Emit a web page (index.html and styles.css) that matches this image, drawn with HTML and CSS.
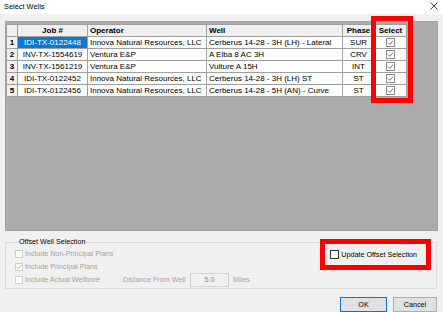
FILE: index.html
```html
<!DOCTYPE html>
<html>
    <head>
        <meta charset="utf-8">
        <link rel="stylesheet" href="styles.css">
    </head>
<body>
    <div class="titlebar">
        <span class="title">Select Wells</span>
        <svg class="close" width="8" height="8" viewBox="0 0 8 8"><path d="M0.5 0.5L7.5 7.5M7.5 0.5L0.5 7.5" stroke="#333" stroke-width="0.9"/></svg>
    </div>

    <div class="grid">
        <table class="wells">
            <colgroup>
                <col style="width:11px"><col style="width:70px"><col style="width:119px">
                <col style="width:136px"><col style="width:32px"><col style="width:32px">
            </colgroup>
            <tr class="head">
                <th></th><th>Job #</th><th class="left">Operator</th><th class="left">Well</th><th>Phase</th><th>Select</th>
            </tr>
            <tr>
                <th>1</th><td class="mid selected">IDI-TX-0122448</td><td>Innova Natural Resources, LLC</td><td>Cerberus 14-28 - 3H (LH) - Lateral</td><td class="mid">SUR</td>
                <td class="mid"><svg class="tick" width="9" height="9" viewBox="0 0 9 9"><rect x="0.5" y="0.5" width="8" height="8" fill="#fff" stroke="#8c8c8c"/><path d="M2 4.6L3.8 6.4L7 2.6" fill="none" stroke="#707070"/></svg></td>
            </tr>
            <tr>
                <th>2</th><td class="mid">INV-TX-1554619</td><td>Ventura E&amp;P</td><td>A Elba 8 AC 3H</td><td class="mid">CRV</td>
                <td class="mid"><svg class="tick" width="9" height="9" viewBox="0 0 9 9"><rect x="0.5" y="0.5" width="8" height="8" fill="#fff" stroke="#8c8c8c"/><path d="M2 4.6L3.8 6.4L7 2.6" fill="none" stroke="#707070"/></svg></td>
            </tr>
            <tr>
                <th>3</th><td class="mid">INV-TX-1561219</td><td>Ventura E&amp;P</td><td>Vulture A 15H</td><td class="mid">INT</td>
                <td class="mid"><svg class="tick" width="9" height="9" viewBox="0 0 9 9"><rect x="0.5" y="0.5" width="8" height="8" fill="#fff" stroke="#8c8c8c"/><path d="M2 4.6L3.8 6.4L7 2.6" fill="none" stroke="#707070"/></svg></td>
            </tr>
            <tr>
                <th>4</th><td class="mid">IDI-TX-0122452</td><td>Innova Natural Resources, LLC</td><td>Cerberus 14-28 - 3H (LH) ST</td><td class="mid">ST</td>
                <td class="mid"><svg class="tick" width="9" height="9" viewBox="0 0 9 9"><rect x="0.5" y="0.5" width="8" height="8" fill="#fff" stroke="#8c8c8c"/><path d="M2 4.6L3.8 6.4L7 2.6" fill="none" stroke="#707070"/></svg></td>
            </tr>
            <tr>
                <th>5</th><td class="mid">IDI-TX-0122456</td><td>Innova Natural Resources, LLC</td><td>Cerberus 14-28 - 5H (AN) - Curve</td><td class="mid">ST</td>
                <td class="mid"><svg class="tick" width="9" height="9" viewBox="0 0 9 9"><rect x="0.5" y="0.5" width="8" height="8" fill="#fff" stroke="#8c8c8c"/><path d="M2 4.6L3.8 6.4L7 2.6" fill="none" stroke="#707070"/></svg></td>
            </tr>
        </table>
    </div>
    <div class="mark-select"></div>

    <fieldset class="offset">
        <legend>Offset Well Selection</legend>
        <div class="row">
            <label class="check off"><span class="box"></span>Include Non-Principal Plans</label>
            <label class="check update"><span class="box dark"></span>Update Offset Selection</label>
        </div>
        <div class="row">
            <label class="check off"><span class="box"><svg width="8" height="8" viewBox="0 0 8 8"><path d="M1.5 4L3.3 5.8L6.6 2" fill="none" stroke="#bdbdbd"/></svg></span>Include Principal Plans</label>
        </div>
        <div class="row">
            <label class="check off wide"><span class="box"></span>Include Actual Wellbore</label>
            <span class="dist">Distance From Well</span>
            <span class="num">5.0</span>
            <span class="unit">Miles</span>
        </div>
    </fieldset>

    <div class="buttons">
        <button class="btn default">OK</button>
        <button class="btn">Cancel</button>
    </div>
</body>
</html>
```

FILE: styles.css
```css
* {
    padding: 0;
    margin: 0;
    box-sizing: border-box;
}
body {
    width: 443px;
    height: 312px;
    overflow: hidden;
    position: relative;
    background-color: #f0f0f0;
    font-family: "Liberation Sans", Arial, sans-serif;
    font-size: 7.2px;
    color: #000;
}
.titlebar {
    height: 14px;
    background-color: #fff;
    display: flex;
    align-items: center;
    justify-content: space-between;
    padding: 0 5px 2px 4px;
}
.title {
    font-size: 7.4px;
}
.grid {
    height: 210px;
    margin: 7px 5px 0 5px;
    background-color: #ababab;
    border: 1px solid #a0a0a0;
    padding: 2px 0 0 0;
}
.wells {
    border-collapse: collapse;
    table-layout: fixed;
    width: 400px;
    font-size: 8px;
    background-color: #fff;
}
.wells th, .wells td {
    border: 1px solid #a0a0a0;
    height: 12px;
    line-height: 10px;
    padding: 0 2px;
    white-space: nowrap;
    overflow: hidden;
    text-align: left;
}
.wells th {
    background-color: #f0f0f0;
    font-weight: bold;
    text-align: center;
    padding: 0;
}
.wells .head th {
    text-align: center;
}
.wells .head th.left {
    text-align: left;
    padding-left: 2px;
}
.wells td.mid {
    text-align: center;
}
.wells td.selected {
    background-color: #0a78d7;
    color: #fff;
}
.tick {
    display: block;
    margin: 0 auto;
}
.mark-select {
    position: absolute;
    left: 371px;
    top: 16px;
    width: 42px;
    height: 87px;
    border: 5px solid #ff0000;
}
.offset {
    margin: 6px 6px 0 5px;
    border: 1px solid #dcdcdc;
    padding: 0 19px 2px 9px;
    height: 52px;
}
.offset legend {
    padding: 0 1px;
    margin-left: 3px;
    line-height: 10px;
    font-size: 7.2px;
}
.row {
    height: 13px;
    display: flex;
    align-items: center;
    justify-content: space-between;
}
.row:last-child {
    justify-content: flex-start;
}
.check {
    display: flex;
    align-items: center;
    gap: 2px;
}
.check.off {
    color: #a2a2a2;
}
.check.wide {
    width: 108px;
}
.box {
    width: 8px;
    height: 8px;
    border: 1px solid #cfcfcf;
    background-color: #fff;
    display: flex;
    align-items: center;
    justify-content: center;
}
.box svg {
    flex: none;
}
.box.dark {
    border-color: #333;
    width: 9px;
    height: 9px;
}
.update {
    position: relative;
    margin-top: 1px;
}
.update::after {
    content: "";
    position: absolute;
    left: -10px;
    right: -14px;
    top: -11px;
    bottom: -11px;
    border: 5px solid #ff0000;
}
.dist {
    color: #a2a2a2;
    width: 67px;
}
.num {
    width: 39px;
    height: 14px;
    border: 1px solid #d2d2d2;
    color: #8a8a8a;
    text-align: center;
    line-height: 12px;
    margin-top: 1px;
}
.unit {
    color: #a2a2a2;
    margin-left: 4px;
}
.buttons {
    display: flex;
    justify-content: flex-end;
    gap: 6px;
    margin: 8px 6px 0 0;
}
.btn {
    font-family: "Liberation Sans", Arial, sans-serif;
    font-size: 7.2px;
    height: 15px;
    width: 44px;
    background-color: #e1e1e1;
    border: 1px solid #adadad;
    color: #000;
}
.btn.default {
    width: 47px;
    border-color: #0078d7;
}
```
